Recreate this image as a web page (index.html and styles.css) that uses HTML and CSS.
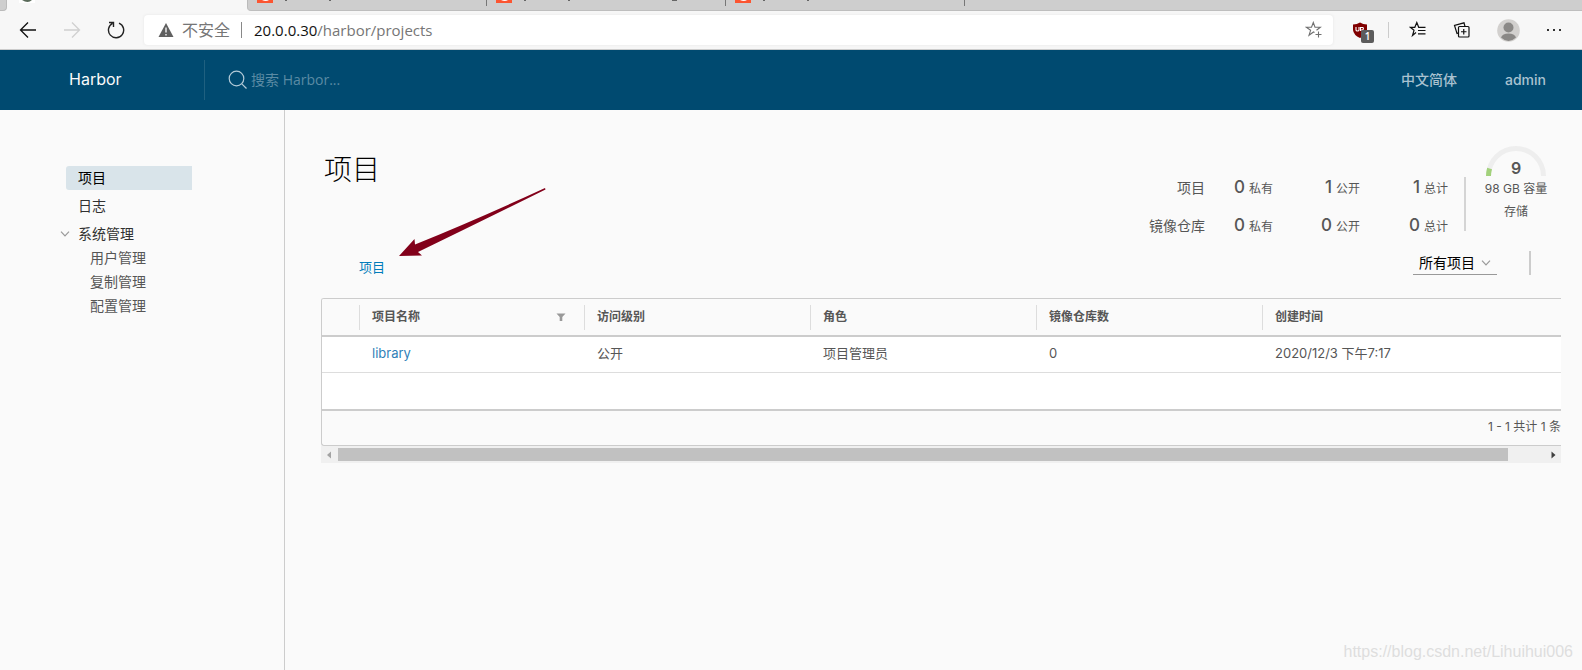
FILE: index.html
```
<!DOCTYPE html>
<html lang="zh-CN">
<head>
<meta charset="utf-8">
<title>Harbor</title>
<link rel="stylesheet" href="styles.css">
</head>
<body>
<div class="tabstrip">
  <div class="tab-prev"></div>
  <div class="tab-active">
    <svg width="16" height="3" viewBox="0 0 16 3"><rect width="16" height="3" fill="#fff"/><path d="M3 0h10q-4 4-10 0z" fill="#5a6b5a"/></svg>
  </div>
  <div class="tab-rest">
    <div class="tab"><svg width="90" height="3" viewBox="0 0 90 3"><rect width="16" height="3" fill="#fc5531"/><path d="M5 0h7q-3 2-7 0z" fill="#fff"/><path d="M28 0h2v1h-2zM72 0h2v1h-2z" fill="#666"/></svg></div>
    <div class="tab"><svg width="190" height="3" viewBox="0 0 190 3"><rect width="16" height="3" fill="#fc5531"/><path d="M5 0h7q-3 2-7 0z" fill="#fff"/><path d="M28 0h2v1h-2zM72 0h2v1h-2zM176 0h5v1h-5z" fill="#666"/></svg></div>
    <div class="tab"><svg width="90" height="3" viewBox="0 0 90 3"><rect width="16" height="3" fill="#fc5531"/><path d="M5 0h7q-3 2-7 0z" fill="#fff"/><path d="M28 0h2v1h-2zM72 0h2v1h-2z" fill="#666"/></svg></div>
  </div>
</div>

<div class="toolbar">
  <div class="nav-buttons">
    <button class="icon-btn" aria-label="后退"><svg width="18" height="18" viewBox="0 0 18 18" fill="none" stroke="#111" stroke-width="1.3"><path d="M17 9H2M9 1.500L1.500 9L9 16.500"/></svg></button>
    <button class="icon-btn" aria-label="前进"><svg width="18" height="18" viewBox="0 0 18 18" fill="none" stroke="#d0d0d0" stroke-width="1.3"><path d="M1 9h15M9 1.500L16.500 9L9 16.500"/></svg></button>
    <button class="icon-btn" aria-label="刷新"><svg width="18" height="18" viewBox="0 0 18 18" fill="none" stroke="#222" stroke-width="1.4"><path d="M12 2.100A7.600 7.600 0 1 1 5.500 2.400M2 1.500h4.500V6"/></svg></button>
  </div>
  <div class="address">
    <svg width="16" height="16" viewBox="0 0 16 16"><path d="M8 1L15.500 15H0.500z" fill="#606060"/><path d="M8 5.500v5M8 12v1.500" stroke="#fff" stroke-width="1.300"/></svg>
    <span class="insecure">不安全</span>
    <span class="address-sep"></span>
    <span class="url"><b>20.0.0.30</b>/harbor/projects</span>
    <button class="icon-btn" aria-label="收藏"><svg width="18" height="18" viewBox="0 0 18 18" fill="none" stroke="#707070" stroke-width="1.100"><path d="M9.500 11.500L8.500 11L4 14.300L5.600 9.300L1.300 6.300H6.500L8.300 1.500L10 6.300H15.300L11.500 9.200M13.500 10.500v6M10.500 13.500h6"/></svg></button>
  </div>
  <div class="extensions">
    <button class="icon-btn shield" aria-label="扩展"><svg width="16" height="17" viewBox="0 0 16 17"><path d="M8 0.500Q11 2.500 15 2.500V8Q14.500 13 8 16Q1.500 13 1 8V2.500Q5 2.500 8 0.500z" fill="#800000"/><path d="M4 5v3q0 1 1.500 1t1.500-1V5M8.500 9V5.500h2.500q1 1.500-.5 2.500h-2M11 8.500l1 1" fill="none" stroke="#fff" stroke-width="1.100"/></svg><span class="badge">1</span></button>
    <span class="ext-sep"></span>
    <button class="icon-btn" aria-label="收藏夹"><svg width="18" height="18" viewBox="0 0 18 18" fill="none" stroke="#111" stroke-width="1.200"><path d="M7 11.500L3.500 14.500L5 9.300L1.300 6.300H5.800L7.800 1.500L9.700 6.300H16.500M9 9.500h7.500M9 12.800h7.500"/></svg></button>
    <button class="icon-btn" aria-label="集锦"><svg width="18" height="18" viewBox="0 0 18 18" fill="none" stroke="#111" stroke-width="1.200"><rect x="5.500" y="5.500" width="10.500" height="10.500" rx="1"/><path d="M10.750 8v5.500M8 10.750h5.500M5.500 12L4 12.500L1.500 4.500L11 1.800L12 5.500"/></svg></button>
    <button class="icon-btn" aria-label="用户"><svg width="23" height="23" viewBox="0 0 23 23"><circle cx="11.500" cy="11.500" r="11.300" fill="#d2d0ce"/><circle cx="11.500" cy="8.500" r="5" fill="#8a8886"/><path d="M4 18.500Q5.500 14.500 11.500 14.500T19 18.500Q11.500 25.500 4 18.500z" fill="#8a8886"/></svg></button>
    <button class="icon-btn" aria-label="更多"><svg width="16" height="4" viewBox="0 0 16 4" fill="#333"><rect x="1" y="1" width="2" height="2"/><rect x="7" y="1" width="2" height="2"/><rect x="13" y="1" width="2" height="2"/></svg></button>
  </div>
</div>

<header class="header">
  <a class="brand" href="#">Harbor</a>
  <label class="search">
    <svg width="20" height="20" viewBox="0 0 20 20" fill="none" stroke="#b3cbd8" stroke-width="1.200"><circle cx="8.500" cy="8.500" r="7.300"/><path d="M13.800 13.800L18.500 18.500"/></svg>
    <input type="text" placeholder="搜索 Harbor..." aria-label="搜索 Harbor">
  </label>
  <nav class="header-links"><a href="#">中文简体</a><a href="#">admin</a></nav>
</header>

<div class="content">
  <nav class="sidebar">
    <a class="nav-item active" href="#">项目</a>
    <a class="nav-item" href="#">日志</a>
    <button class="nav-item group"><svg width="10" height="6" viewBox="0 0 10 6" fill="none" stroke="#999" stroke-width="1.200"><path d="M1 .7L5 4.800L9 .7"/></svg>系统管理</button>
    <div class="nav-children">
      <a href="#">用户管理</a>
      <a href="#">复制管理</a>
      <a href="#">配置管理</a>
    </div>
  </nav>

  <main class="main">
    <section class="overview">
      <h1>项目</h1>
      <div class="stats">
        <span class="stat-name">项目</span>
        <span><b>0</b>私有</span><span><b>1</b>公开</span><span><b>1</b>总计</span>
        <span class="stat-name">镜像仓库</span>
        <span><b>0</b>私有</span><span><b>0</b>公开</span><span><b>0</b>总计</span>
      </div>
      <div class="storage">
        <div class="gauge">
          <svg width="60" height="30" viewBox="0 0 60 30" fill="none" stroke-width="5"><path d="M2.500 30A27.500 27.500 0 0 1 57.500 30" stroke="#eee"/><path d="M2.500 30A27.500 27.500 0 0 1 3.600 22.500" stroke="#a2d17b"/></svg>
          <strong>9</strong>
        </div>
        <span>98 GB 容量</span>
        <span>存储</span>
      </div>
    </section>

    <div class="actions">
      <button class="link-btn">项目</button>
      <div class="filter">
        <select aria-label="项目筛选"><option>所有项目</option></select>
        <svg width="10" height="6" viewBox="0 0 10 6" fill="none" stroke="#999" stroke-width="1.200"><path d="M1 .7L5 4.800L9 .7"/></svg>
      </div>
      <span class="action-sep"></span>
    </div>

    <div class="datagrid">
      <table>
        <colgroup><col class="col-select"><col class="col"><col class="col"><col class="col"><col class="col"><col></colgroup>
        <thead><tr>
          <th></th>
          <th><div>项目名称<svg width="10" height="8" viewBox="0 0 10 8"><path d="M.5 .5h9L6.300 4v4H3.700V4z" fill="#999"/></svg></div></th>
          <th><div>访问级别</div></th><th><div>角色</div></th><th><div>镜像仓库数</div></th><th><div>创建时间</div></th>
        </tr></thead>
        <tbody>
          <tr><td></td><td><a href="#">library</a></td><td>公开</td><td>项目管理员</td><td>0</td><td>2020/12/3 下午7:17</td></tr>
          <tr><td colspan="6"></td></tr>
        </tbody>
      </table>
      <div class="grid-footer">1 - 1 共计 1 条</div>
    </div>
    <div class="scrollbar">
      <svg width="14" height="16" viewBox="0 0 14 16"><path d="M10 4.500v7L6 8z" fill="#a3a3a3"/></svg>
      <div class="track"><div class="thumb"></div></div>
      <svg width="14" height="16" viewBox="0 0 14 16"><path d="M4.500 4.500v7L8.500 8z" fill="#404040"/></svg>
    </div>
    <svg class="pointer" width="148" height="70" viewBox="0 0 148 70"><path d="M1 69L16.500 52L17 57.500Q80 32 147 1L147.500 2.500Q82 35 20 65L24 68.500z" fill="#82001a"/></svg>
  </main>
</div>
<div class="watermark">https://blog.csdn.net/Lihuihui006</div>
</body>
</html>
```
FILE: styles.css
```
* { box-sizing: border-box; }
body {
  margin: 0;
  min-height: 100vh;
  display: flex;
  flex-direction: column;
  background: #fafafa;
  color: #565656;
  font: 14px/24px Inter, "Noto Sans CJK SC", sans-serif;
  overflow: hidden;
}
a { color: inherit; text-decoration: none; }
button { border: 0; padding: 0; margin: 0; background: none; color: inherit; font: inherit; }
svg { display: block; flex: none; }

.tabstrip { display: flex; height: 11px; background: #f7f7f7; }
.tab-prev { width: 7px; background: #cecece; border-bottom: 1px solid #bbb; border-right: 1px solid #bbb; border-bottom-right-radius: 4px; }
.tab-active { width: 240px; padding-left: 12px; }
.tab-rest { flex: 1; display: flex; background: #cecece; border-bottom: 1px solid #bebebe; border-left: 1px solid #bbb; border-bottom-left-radius: 4px; }
.tab { width: 239px; padding-left: 9px; height: 6px; border-right: 1px solid #777; }

.toolbar { display: flex; align-items: center; height: 39px; background: #f7f7f7; border-bottom: 1px solid #ccc; }
.icon-btn { display: flex; align-items: center; justify-content: center; }
.nav-buttons { display: flex; gap: 26px; padding: 0 19px; }
.address {
  flex: 1; display: flex; align-items: center; height: 30px; padding: 0 10px 0 14px;
  background: #fff; border-radius: 4px; box-shadow: 0 0 3px #e4e4e4;
  font: 16px/30px "Noto Sans", "Noto Sans CJK SC", sans-serif; color: #767676;
}
.insecure { margin-left: 8px; }
.address-sep { width: 1px; height: 16px; margin: 0 12px 0 11px; background: #888; }
.url { flex: 1; font-family: "Open Sans", sans-serif; font-size: 15px; }
.url b { font-weight: 400; color: #111; }
.extensions { display: flex; align-items: center; padding: 0 20px 0 19px; }
.extensions > * { margin-right: 26px; }
.extensions > :last-child { margin-right: 0; }
.extensions .shield { position: relative; margin-right: 20px; }
.badge {
  position: absolute; left: 9px; top: 8px; width: 13px; height: 13px;
  background: #5c5c5c; border-radius: 2px; color: #fff; font: 600 10px/13px "Open Sans", sans-serif; text-align: center;
}
.extensions .ext-sep { width: 1px; height: 16px; margin-right: 20px; background: #ccc; }

.header { display: flex; align-items: center; height: 60px; background: #004a70; color: #fafafa; }
.brand { width: 204px; padding-left: 69px; font-size: 16px; line-height: 26px; padding-bottom: 2px; font-weight: 400; }
.search { flex: 1; display: flex; align-items: center; gap: 3px; height: 40px; padding-left: 23px; border-left: 1px solid #1f6080; }
.search input { flex: 1; border: 0; outline: 0; background: none; padding: 0; font: 14px/24px "Open Sans", "Noto Sans CJK SC", sans-serif; color: #fff; }
.search input::placeholder { color: #5b8ba4; opacity: 1; }
.header-links { display: flex; gap: 48px; padding-right: 36px; color: #a9c2d0; font-weight: 500; }

.content { flex: 1; display: flex; }
.sidebar { width: 285px; padding: 56px 92px 0 66px; border-right: 1px solid #ccc; color: #313131; }
.nav-item { display: flex; align-items: center; height: 24px; margin-bottom: 4px; padding-left: 12px; }
.nav-item.active { background: #d9e4ea; color: #000; border-radius: 3px 0 0 3px; }
.nav-item.group { margin: 0 0 0 -6px; padding: 0; gap: 8px; }
.nav-children { display: flex; flex-direction: column; padding-left: 24px; color: #565656; }

.main { position: relative; flex: 1; min-width: 0; padding: 36px 21px 0 36px; }
.overview { display: flex; align-items: flex-start; padding-right: 12px; }
h1 { flex: 1; margin: 0; padding: 4px 3px; color: #000; font-size: 28px; line-height: 40px; font-weight: 300; }
.stats {
  display: grid; grid-template-columns: 57px 68px 87px 88px; row-gap: 16px;
  margin-top: 31px; padding-right: 16px; border-right: 2px solid #d4d4d4; text-align: right; font-size: 12px; height: 54px; line-height: 20px;
}
.stats b { margin-right: 4px; font-size: 17px; font-weight: 500; }
.stat-name { font-size: 14px; line-height: 22px; }
.storage { display: flex; flex-direction: column; align-items: center; width: 66px; margin-left: 17px; font-size: 12px; line-height: 23px; white-space: nowrap; }
.gauge { position: relative; padding-bottom: 1px; }
.gauge strong { position: absolute; left: 0; right: 0; bottom: -3px; text-align: center; font-size: 16px; font-weight: 600; }

.actions { display: flex; align-items: center; height: 24px; margin: 20px 30px 23px 38px; }
.link-btn { margin-right: auto; padding-top: 8px; color: #007cbb; font-size: 13px; }
.filter { display: flex; align-items: center; width: 84px; border-bottom: 1px solid #999; padding-right: 6px; }
.filter select { flex: 1; appearance: none; border: 0; background: none; padding: 0 0 2px 6px; color: #000; font: 14px/20px "Noto Sans CJK SC", sans-serif; }
.action-sep { width: 2px; height: 24px; margin-left: 32px; background: #ccc; }

.datagrid { border: 1px solid #ccc; border-right: 0; border-radius: 3px 0 0 3px; overflow: hidden; }
table { width: 100%; table-layout: fixed; border-collapse: separate; border-spacing: 0; background: #fff; font-size: 13px; }
.col-select { width: 37px; }
.col { width: 226px; }
.col-select + .col { width: 225px; }
th { height: 38px; padding: 0; background: #fafafa; border-bottom: 2px solid #ccc; text-align: left; font-size: 12px; font-weight: 600; }
th div { display: flex; align-items: center; justify-content: space-between; height: 25px; padding: 0 18px 0 12px; border-left: 1px solid #ddd; }
td { height: 36px; padding: 0 13px 3px; border-bottom: 1px solid #ddd; }
td a { color: #2f7fb8; }
tr:last-child td { height: 38px; border-bottom: 2px solid #ccc; }
.grid-footer { height: 34px; line-height: 32px; text-align: right; font-size: 12px; }

.scrollbar { display: flex; height: 17px; align-items: center; background: #f0f0f0; }
.track { flex: 1; padding: 0 39px 0 3px; }
.thumb { height: 13px; background: #c1c1c1; }
.pointer { position: absolute; left: 113px; top: 77px; }
.watermark { position: absolute; right: 9px; bottom: 6px; color: #dedede; font: 400 16px/24px "Liberation Sans", sans-serif; }
```
